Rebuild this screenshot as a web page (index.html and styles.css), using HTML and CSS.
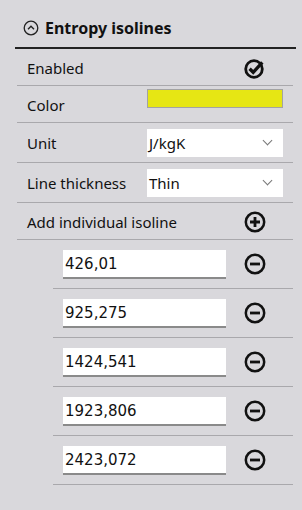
FILE: index.html
```html
<!DOCTYPE html>
<html lang="en">
<head>
  <meta charset="UTF-8" />
  <title>Entropy isolines</title>
  <link rel="stylesheet" href="styles.css">
</head>
<body>
  <div class="panel">
    <header class="panel-head">
      <svg class="collapse" width="16" height="16" viewBox="0 0 16 16">
        <circle cx="8" cy="8" r="6.8" fill="none" stroke="#222" stroke-width="1.3"/>
        <path d="M5 9.3 L8 6.3 L11 9.3" fill="none" stroke="#222" stroke-width="1.4"/>
      </svg>
      <span class="title">Entropy isolines</span>
    </header>

    <div class="rows">
      <div class="row">
        <span class="label">Enabled</span>
        <svg class="icon" width="24" height="24" viewBox="0 0 24 24">
          <circle cx="11" cy="13" r="8.3" fill="none" stroke="#111" stroke-width="2.8"/>
          <path d="M6.6 12.8 L10.2 16.3 L19.3 6.3" fill="none" stroke="#111" stroke-width="3.3"/>
        </svg>
      </div>

      <div class="row">
        <span class="label">Color</span>
        <div class="swatch"></div>
      </div>

      <div class="row row-select">
        <span class="label">Unit</span>
        <div class="select">J/kgK<span class="chev"></span></div>
      </div>

      <div class="row row-select">
        <span class="label">Line thickness</span>
        <div class="select">Thin<span class="chev"></span></div>
      </div>

      <div class="row">
        <span class="label">Add individual isoline</span>
        <svg class="icon" width="24" height="24" viewBox="0 0 24 24">
          <circle cx="12" cy="12" r="9.2" fill="none" stroke="#111" stroke-width="2.5"/>
          <path d="M7 12 H17 M12 7 V17" stroke="#111" stroke-width="2.8"/>
        </svg>
      </div>

      <div class="iso-list">
        <div class="iso">
          <div class="field">426,01</div>
          <svg class="icon" width="24" height="24" viewBox="0 0 24 24">
            <circle cx="12" cy="12" r="9.2" fill="none" stroke="#111" stroke-width="2.5"/>
            <path d="M7 12 H17" stroke="#111" stroke-width="2.8"/>
          </svg>
        </div>
        <div class="iso">
          <div class="field">925,275</div>
          <svg class="icon" width="24" height="24" viewBox="0 0 24 24">
            <circle cx="12" cy="12" r="9.2" fill="none" stroke="#111" stroke-width="2.5"/>
            <path d="M7 12 H17" stroke="#111" stroke-width="2.8"/>
          </svg>
        </div>
        <div class="iso">
          <div class="field">1424,541</div>
          <svg class="icon" width="24" height="24" viewBox="0 0 24 24">
            <circle cx="12" cy="12" r="9.2" fill="none" stroke="#111" stroke-width="2.5"/>
            <path d="M7 12 H17" stroke="#111" stroke-width="2.8"/>
          </svg>
        </div>
        <div class="iso">
          <div class="field">1923,806</div>
          <svg class="icon" width="24" height="24" viewBox="0 0 24 24">
            <circle cx="12" cy="12" r="9.2" fill="none" stroke="#111" stroke-width="2.5"/>
            <path d="M7 12 H17" stroke="#111" stroke-width="2.8"/>
          </svg>
        </div>
        <div class="iso">
          <div class="field">2423,072</div>
          <svg class="icon" width="24" height="24" viewBox="0 0 24 24">
            <circle cx="12" cy="12" r="9.2" fill="none" stroke="#111" stroke-width="2.5"/>
            <path d="M7 12 H17" stroke="#111" stroke-width="2.8"/>
          </svg>
        </div>
      </div>
    </div>
  </div>
</body>
</html>
```

FILE: styles.css
```css
body {
  margin: 0;
  background: #d9d8dc;
  font-family: 'Noto Sans', sans-serif;
  color: #111;
  height: 510px;
}
.panel {
  padding: 0 6px 0 15px;
}
.panel-head {
  height: 49px;
  display: flex;
  align-items: center;
  padding: 8px 0 0 8px;
  box-sizing: border-box;
  border-bottom: 2px solid #222;
}
.collapse {
  margin-right: 6px;
}
.title {
  font-weight: bold;
  font-size: 16px;
}
.rows {
  margin: 0 3px 0 2px;
}
.row {
  display: flex;
  align-items: center;
  justify-content: space-between;
  height: 37px;
  padding: 2px 26px 0 10px;
  box-sizing: border-box;
  border-bottom: 1px solid #a9a8ac;
  font-size: 15px;
}
.row-select {
  height: 40px;
  padding: 0 10px 0 10px;
}
.icon {
  flex: none;
}
.swatch {
  width: 134px;
  height: 17px;
  background: #e6e614;
  border: 1px solid #a3a3a3;
  align-self: flex-start;
  margin: 1px -16px 0 0;
}
.select {
  width: 136px;
  height: 28px;
  box-sizing: border-box;
  background: #fff;
  display: flex;
  align-items: center;
  justify-content: space-between;
  padding: 0 12px 0 2px;
  font-size: 15px;
}
.chev {
  width: 6px;
  height: 6px;
  border-right: 1px solid #777;
  border-bottom: 1px solid #777;
  transform: rotate(45deg);
  margin-top: -4px;
}
.iso-list {
  margin-left: 36px;
}
.iso {
  display: flex;
  align-items: center;
  justify-content: space-between;
  height: 49px;
  padding: 0 26px 0 10px;
  box-sizing: border-box;
  border-bottom: 1px solid #a9a8ac;
}
.field {
  width: 163px;
  height: 29px;
  box-sizing: border-box;
  background: #fff;
  border-bottom: 2px solid #8a8a8a;
  padding: 2px 2px 0;
  font-family: 'DejaVu Sans', sans-serif;
  font-size: 15px;
  line-height: 24px;
}
```
